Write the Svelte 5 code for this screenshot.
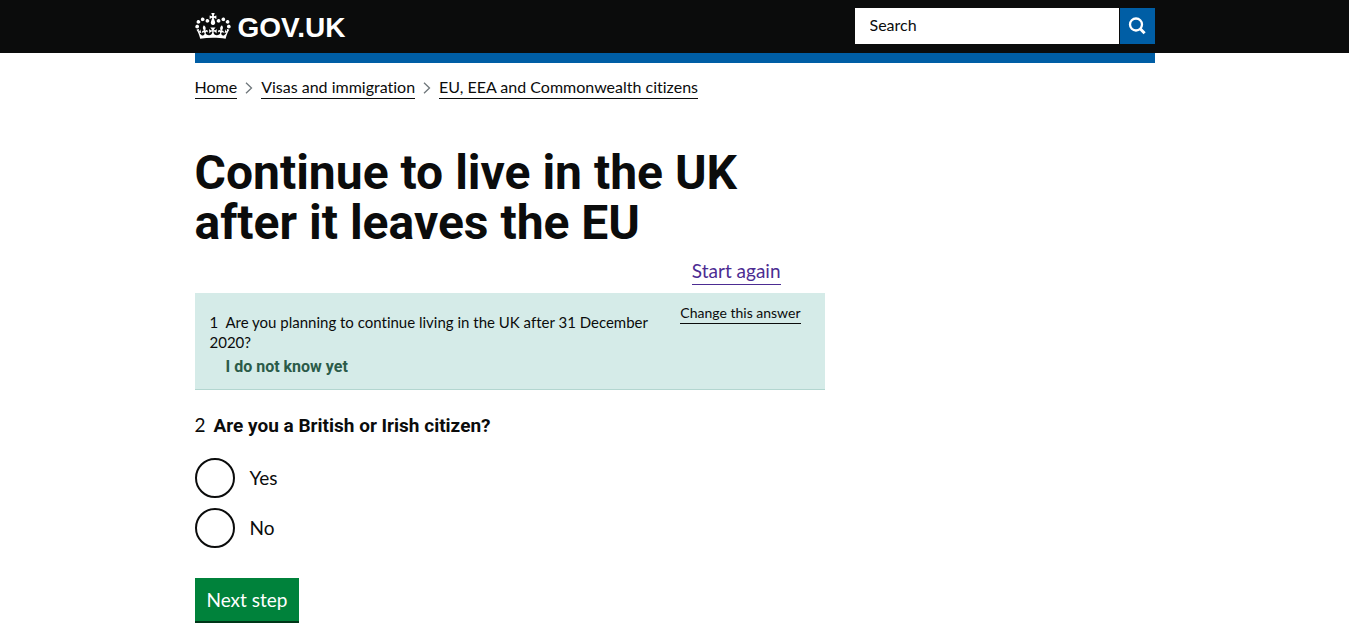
<script>
  const crumbs = ['Home', 'Visas and immigration', 'EU, EEA and Commonwealth citizens'];
  const options = ['Yes', 'No'];
  let query = $state('');
  let answer = $state('');
</script>

<header class="header">
  <div class="container header-inner">
    <a class="logo" href="/">
      <svg viewBox="0 0 132 97" width="36" height="26" aria-hidden="true">
        <path fill="currentColor" fill-rule="evenodd" d="M25 30.2c3.5 1.5 7.7-.2 9.1-3.7 1.5-3.6-.2-7.8-3.9-9.2-3.6-1.4-7.6.3-9.1 3.9-1.4 3.5.3 7.5 3.9 9zM9 39.5c3.6 1.5 7.8-.2 9.2-3.7 1.5-3.6-.2-7.8-3.9-9.1-3.6-1.5-7.6.2-9.1 3.8-1.4 3.5.3 7.5 3.8 9zM4.4 57.2c3.5 1.5 7.7-.2 9.1-3.8 1.5-3.6-.2-7.7-3.9-9.1-3.5-1.5-7.6.3-9.1 3.8-1.4 3.5.3 7.6 3.9 9.1zm38.3-21.4c3.5 1.5 7.7-.2 9.1-3.8 1.5-3.6-.2-7.7-3.9-9.1-3.6-1.5-7.6.3-9.1 3.8-1.3 3.6.4 7.7 3.9 9.1zm64.4-5.6c-3.6 1.5-7.8-.2-9.1-3.7-1.5-3.6.2-7.8 3.8-9.2 3.6-1.4 7.7.3 9.2 3.9 1.3 3.5-.4 7.5-3.9 9zm15.9 9.3c-3.6 1.5-7.7-.2-9.1-3.7-1.5-3.6.2-7.8 3.7-9.1 3.6-1.5 7.7.2 9.2 3.8 1.5 3.5-.3 7.5-3.8 9zm4.7 17.7c-3.6 1.5-7.8-.2-9.2-3.8-1.5-3.6.2-7.7 3.9-9.1 3.6-1.5 7.7.3 9.2 3.8 1.3 3.5-.4 7.6-3.9 9.1zM89.3 35.8c-3.6 1.5-7.8-.2-9.2-3.8-1.4-3.6.2-7.7 3.9-9.1 3.6-1.5 7.7.3 9.2 3.8 1.4 3.6-.3 7.7-3.9 9.1zM69.7 17.7l8.9 4.7V9.3l-8.9 2.8c-.2-.3-.5-.6-.9-.9L72.4 0H59.6l3.5 11.2c-.3.3-.6.5-.9.9l-8.8-2.8v13.1l8.8-4.7c.3.3.6.7.9.9l-5 15.4v.1c-.2.8-.4 1.6-.4 2.4 0 4.1 3.1 7.5 7 8.1h.2c.3 0 .7.1 1 .1.4 0 .7 0 1-.1h.2c4-.6 7.1-4.1 7.1-8.1 0-.8-.1-1.7-.4-2.4V34l-5.1-15.4c.4-.2.7-.6 1-.9zM66 92.8c16.9 0 32.8 1.1 47.1 3.2 4-16.9 8.9-26.7 14-33.5l-9.6-3.4c1 4.9 1.1 7.2 0 10.2-1.5-1.4-3-4.3-4.2-8.7L108.6 76c2.8-2 5-3.2 7.5-3.3-4.4 9.4-10 11.9-13.6 11.2-4.3-.8-6.3-4.6-5.6-7.9 1-4.7 5.7-5.9 8-.5 4.3-8.7-3-11.4-7.6-8.8 7.1-7.2 7.9-13.5 2.1-21.1-8 6.1-8.1 12.3-4.5 20.8-4.7-5.4-12.1-2.5-9.5 6.2 3.4-5.2 7.9-2 7.2 3.1-.6 4.3-6.4 7.8-13.5 7.2-10.3-.9-10.9-8-11.2-13.8 2.5-.5 7.1 1.8 11 7.3L80.2 60c-4.1 4.4-8 5.3-12.3 5.4 1.4-4.4 8-11.6 8-11.6H55.5s6.4 7.2 7.9 11.6c-4.2-.1-8-1-12.3-5.4l1.4 16.4c3.9-5.5 8.5-7.7 10.9-7.3-.3 5.8-.9 12.8-11.1 13.8-7.2.6-12.9-2.9-13.5-7.2-.7-5 3.8-8.3 7.1-3.1 2.7-8.7-4.6-11.6-9.4-6.2 3.7-8.5 3.6-14.7-4.6-20.8-5.8 7.6-5 13.9 2.2 21.1-4.7-2.6-11.9.1-7.7 8.8 2.3-5.5 7.1-4.2 8.1.5.7 3.3-1.3 7.1-5.7 7.9-3.5.7-9-1.8-13.5-11.2 2.5.1 4.7 1.3 7.5 3.3l-4.7-15.4c-1.2 4.4-2.7 7.2-4.3 8.7-1.1-3-.9-5.3 0-10.2l-9.5 3.4c5 6.9 9.9 16.7 14 33.5 14.8-2.1 30.8-3.2 47.7-3.2z" />
      </svg>
      <span>GOV.UK</span>
    </a>
    <form class="search" role="search" onsubmit={(e) => e.preventDefault()}>
      <input type="search" aria-label="Search" placeholder="Search" bind:value={query} />
      <button type="submit" aria-label="Search GOV.UK">
        <svg viewBox="0 0 18 18" width="18" height="18" fill="none" stroke="currentColor" aria-hidden="true">
          <circle cx="8" cy="7.5" r="6" stroke-width="2.3" />
          <path d="M12.2 11.8 16.6 16.2" stroke-width="3" />
        </svg>
      </button>
    </form>
  </div>
</header>

<div class="container">
  <div class="bar"></div>
  <nav aria-label="Breadcrumb">
    <ol class="crumbs">
      {#each crumbs as crumb, i}
        <li>
          {#if i > 0}
            <svg viewBox="0 0 8 12" width="8" height="12" fill="none" stroke="#6f777b" stroke-width="1.3" aria-hidden="true">
              <path d="M1 .8 6.5 6 1 11.2" />
            </svg>
          {/if}
          <a href="/">{crumb}</a>
        </li>
      {/each}
    </ol>
  </nav>

  <main>
    <h1>Continue to live in the UK after it leaves the EU</h1>
    <div class="restart"><a href="/">Start again</a></div>

    <section class="previous">
      <div class="previous-text">
        <h2>1&nbsp; Are you planning to continue living in the UK after 31 December 2020?</h2>
        <p>I do not know yet</p>
      </div>
      <a href="/">Change this answer</a>
    </section>

    <form onsubmit={(e) => e.preventDefault()}>
      <fieldset>
        <legend><span class="number">2</span><strong>Are you a British or Irish citizen?</strong></legend>
        {#each options as option}
          <label class="option">
            <input type="radio" name="response" value={option} bind:group={answer} />
            <span>{option}</span>
          </label>
        {/each}
      </fieldset>
      <button class="next" type="submit">Next step</button>
    </form>
  </main>
</div>

<style>
  :global(body) {
    background: #fff;
    color: #0b0c0c;
    font-family: Lato, "Liberation Sans", sans-serif;
    font-size: 16px;
    line-height: 20px;
    font-variant-ligatures: none;
  }

  :global(*) {
    box-sizing: border-box;
  }

  .container {
    max-width: 960px;
    margin: 0 auto;
  }

  .header {
    background: #0b0c0c;
    padding: 8px 0 9px;
  }

  .header-inner {
    display: flex;
    justify-content: space-between;
    align-items: center;
  }

  .logo {
    display: flex;
    align-items: flex-start;
    gap: 7px;
    padding-top: 3px;
    color: #fff;
    font: 700 28px/30px "Liberation Sans", sans-serif;
    text-decoration: none;
  }

  .search {
    display: flex;
    gap: 1px;
    width: 300px;
    height: 36px;
  }

  .search input {
    flex: 1;
    min-width: 0;
    padding: 0 15px 2px;
    border: 0;
    border-radius: 0;
    background: #fff;
    color: #0b0c0c;
    font: inherit;
    appearance: none;
  }

  .search input::placeholder {
    color: #0b0c0c;
    opacity: 1;
  }

  .search button {
    display: grid;
    place-items: center;
    width: 35px;
    padding: 0;
    border: 0;
    background: #005ea5;
    color: #fff;
  }

  .bar {
    height: 10px;
    background: #005ea5;
  }

  .crumbs {
    display: flex;
    flex-wrap: wrap;
    gap: 8px;
    margin: 0;
    padding: 14px 0 0;
    list-style: none;
  }

  .crumbs li {
    display: flex;
    align-items: center;
    gap: 8px;
  }

  .crumbs a,
  .previous > a {
    padding-bottom: 1px;
    border-bottom: 1px solid #0b0c0c;
    color: #0b0c0c;
    text-decoration: none;
  }

  main {
    max-width: 630px;
    padding: 49px 0 10px;
  }

  h1 {
    margin: 0;
    font: 700 48px/50px Roboto, sans-serif;
  }

  .restart {
    display: flex;
    justify-content: flex-end;
    padding: 11px 44px 8px 0;
    font-size: 19px;
    line-height: 24px;
  }

  .restart a {
    padding-bottom: 1px;
    border-bottom: 1px solid #4c2c92;
    color: #4c2c92;
    text-decoration: none;
  }

  .previous {
    display: flex;
    justify-content: space-between;
    align-items: flex-start;
    padding: 11px 24px 12px 15px;
    border-bottom: 1px solid #b3d6d0;
    background: #d5ebe8;
  }

  .previous-text {
    flex: 0 1 456px;
    padding-top: 8px;
  }

  .previous > a {
    font-size: 14px;
    line-height: 18px;
    white-space: nowrap;
  }

  h2 {
    margin: 0;
    font-size: 15px;
    font-weight: 400;
    line-height: 20px;
  }

  .number {
    margin-right: 8px;
  }

  .previous p {
    margin: 5px 0 0 16px;
    color: #2b5b49;
    font-family: Roboto, sans-serif;
    font-weight: 700;
  }

  fieldset {
    min-width: 0;
    margin: 0;
    padding: 23px 0 0;
    border: 0;
  }

  legend {
    float: left;
    width: 100%;
    margin-bottom: 20px;
    padding: 0;
    font-size: 19px;
    line-height: 24px;
  }

  legend strong {
    font-family: Roboto, sans-serif;
  }

  .option {
    display: flex;
    align-items: center;
    gap: 15px;
    clear: both;
    margin-bottom: 10px;
    font-size: 19px;
    line-height: 24px;
  }

  .option input {
    width: 40px;
    height: 40px;
    margin: 0;
    border: 2px solid #0b0c0c;
    border-radius: 50%;
    appearance: none;
  }

  .option input:checked {
    background: radial-gradient(#0b0c0c 10px, transparent 11px);
  }

  .next {
    margin-top: 20px;
    padding: 10px 12px 9px;
    border: 0;
    background: #00823b;
    box-shadow: 0 2px 0 #003618;
    color: #fff;
    font: 400 19px/24px Lato, sans-serif;
  }
</style>
